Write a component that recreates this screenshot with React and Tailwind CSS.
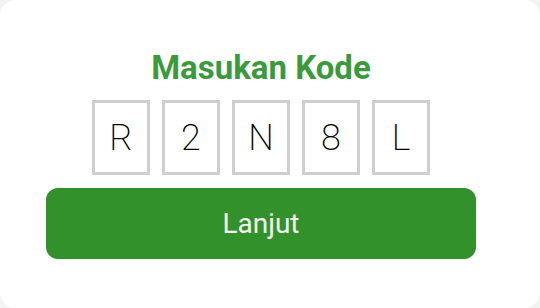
import React from 'react';

// Dialog masukan kode
export default function App() {
  const kode = ['R', '2', 'N', '8', 'L'];

  return (
    <div className="w-[540px] h-[308px] bg-[#f3f3f3]" style={{ fontFamily: 'Roboto, "Noto Sans", sans-serif' }}>
      <div className="w-full h-full bg-white rounded-[16px] pt-[49px] pl-[46px] pr-[64px]">
        <div className="flex flex-col items-center">
          <h1 className="text-[33px] leading-[38px] font-bold text-[#3b9a3b]">Masukan Kode</h1>

          <div className="mt-[13px] flex gap-[12px]">
            {kode.map((huruf, i) => (
              <div
                key={i}
                className="w-[58px] h-[75px] border-[3px] border-[#cfcfcf] bg-white flex items-center justify-center text-[36px] font-[200] text-black"
              >
                {huruf}
              </div>
            ))}
          </div>

          <button className="mt-[13px] w-[430px] h-[71px] rounded-[12px] bg-[#33912c] text-[#f2f7f1] text-[28px] font-normal flex items-center justify-center">
            Lanjut
          </button>
        </div>
      </div>
    </div>
  );
}
